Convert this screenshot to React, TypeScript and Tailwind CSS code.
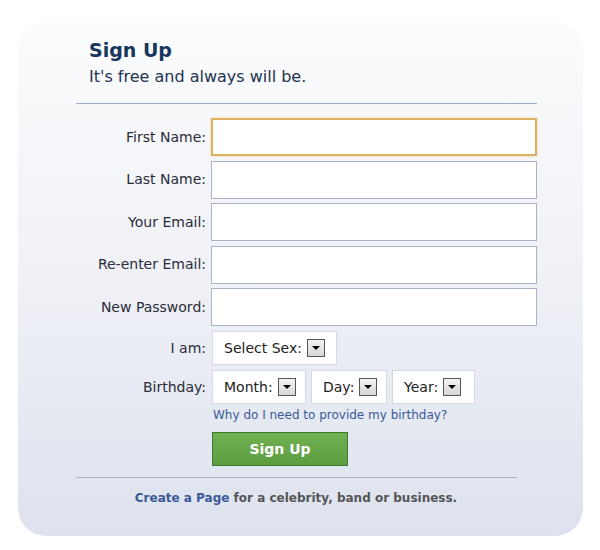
import React from 'react';

const font = { fontFamily: '"DejaVu Sans", Verdana, sans-serif' };

const fields = ['First Name:', 'Last Name:', 'Your Email:', 'Re-enter Email:', 'New Password:'];

function Arrow() {
  return (
    <span className="inline-flex w-[18px] h-[18px] items-center justify-center border border-[#555] bg-gradient-to-b from-[#f4f4f4] to-[#d6d6d6]">
      <span className="w-0 h-0 border-l-[4px] border-r-[4px] border-t-[4px] border-l-transparent border-r-transparent border-t-black" />
    </span>
  );
}

function SelectBox({ label, width }: { label: string; width: string }) {
  return (
    <div className={`h-[34px] ${width} bg-white border border-[#d4d9e3] flex items-center pl-[11px] gap-[5px] text-[14px] text-[#222]`}>
      <span>{label}</span>
      <Arrow />
    </div>
  );
}

export default function App() {
  return (
    <div className="w-[600px] h-[550px] bg-white pt-[22px] pl-[18px]" style={font}>
      <div className="w-[565px] h-[514px] rounded-[28px] bg-gradient-to-b from-[#fbfcfd] via-[#eff1f6] to-[#dde2ee] pt-[16px]">
        <div className="pl-[71px]">
          <h1 className="text-[19px] leading-[24px] font-bold text-[#17365d]">Sign Up</h1>
          <p className="text-[16px] leading-[20px] mt-[5px] text-[#243350]">It's free and always will be.</p>
        </div>
        <div className="ml-[58px] w-[461px] h-px bg-[#9aabc6] mt-[16px]" />

        <div className="mt-[14px] flex flex-col gap-[4.5px]">
          {fields.map((f, i) => (
            <div key={f} className="flex items-center h-[38px]">
              <label className="w-[193px] text-right text-[14px] text-[#2b2b3a] pr-[5px]">{f}</label>
              <div
                className={`w-[326px] h-[38px] bg-white ${
                  i === 0 ? 'border-2 border-[#ddb062] shadow-[0_0_2px_#f0d08a]' : 'border border-[#a8b3c8]'
                }`}
              />
            </div>
          ))}
        </div>

        <div className="flex items-center h-[34px] mt-[5px]">
          <label className="w-[194px] text-right text-[14px] text-[#2b2b3a] pr-[6px]">I am:</label>
          <SelectBox label="Select Sex:" width="w-[125px]" />
        </div>

        <div className="flex items-center h-[34px] mt-[5px]">
          <label className="w-[194px] text-right text-[14px] text-[#2b2b3a] pr-[6px]">Birthday:</label>
          <div className="flex gap-[5px]">
            <SelectBox label="Month:" width="w-[94px]" />
            <SelectBox label="Day:" width="w-[76px]" />
            <SelectBox label="Year:" width="w-[83px]" />
          </div>
        </div>

        <div className="pl-[195px] mt-[3px] text-[12px] leading-[16px] text-[#3b5998]">
          Why do I need to provide my birthday?
        </div>

        <div className="pl-[194px] mt-[9px]">
          <button className="w-[136px] h-[34px] bg-gradient-to-b from-[#70b151] to-[#5e9c41] border border-[#3f7a2a] text-white font-bold text-[14px]">
            Sign Up
          </button>
        </div>

        <div className="ml-[58px] w-[441px] h-px bg-[#aab2c4] mt-[11px]" />

        <p className="mt-[11px] text-center w-[556px] text-[12px] font-bold text-[#555]">
          <span className="text-[#3b5998]">Create a Page</span> for a celebrity, band or business.
        </p>
      </div>
    </div>
  );
}
